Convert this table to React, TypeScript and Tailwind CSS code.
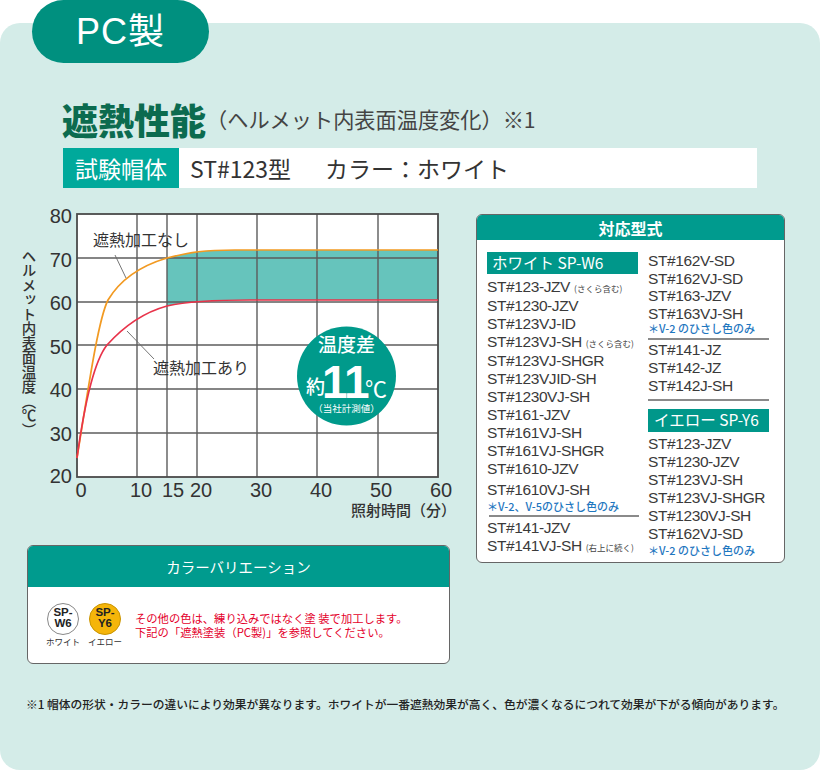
import React from 'react';

const JP = "'Noto Sans CJK JP', sans-serif";
const NUM = "'Liberation Sans', 'Noto Sans CJK JP', sans-serif";

const V_LINES = [137, 167, 197, 257, 317, 378];
const H_LINES = [258, 302, 345, 389, 433];
const Y_LABELS: [string, number][] = [
  ['80', 223],
  ['70', 267],
  ['60', 310],
  ['50', 354],
  ['40', 397],
  ['30', 441],
  ['20', 483],
];
const X_LABELS: [string, number][] = [
  ['0', 81],
  ['10', 141],
  ['15', 173],
  ['20', 201],
  ['30', 261],
  ['40', 321],
  ['50', 381],
  ['60', 441],
];

function Chart() {
  return (
    <svg width="460" height="320" viewBox="0 200 460 320" className="block shrink-0">
      <rect x="77" y="214" width="361" height="263" fill="#fff" />
      {/* difference band */}
      <path
        d="M167 258 C190 252 205 250 235 250 L438 250 L438 300 L250 300 C210 300 185 302 167 306 Z"
        fill="#66c4bc"
      />
      {V_LINES.map(x => (
        <line key={x} x1={x} y1={214} x2={x} y2={477} stroke="#5c5c5c" strokeWidth="1.4" />
      ))}
      {H_LINES.map(y => (
        <line key={y} x1={77} y1={y} x2={438} y2={y} stroke="#5c5c5c" strokeWidth="1.4" />
      ))}
      <rect x="77" y="214" width="361" height="263" fill="none" stroke="#4a4a4a" strokeWidth="1.8" />

      {/* curves */}
      <path
        d="M77 458 C88 390 98 320 108 300 C120 280 140 266 167 258 C190 252 205 250 235 250 L438 250"
        fill="none"
        stroke="#f29a22"
        strokeWidth="1.7"
      />
      <path
        d="M77 458 C85 400 95 360 107 345 C125 325 145 312 167 306 C185 302 210 300 250 300 L438 300"
        fill="none"
        stroke="#e8334a"
        strokeWidth="1.7"
      />

      {/* leaders + curve labels */}
      <line x1="115" y1="255" x2="126" y2="278" stroke="#666" strokeWidth="0.9" />
      <line x1="127" y1="331" x2="154" y2="359" stroke="#666" strokeWidth="0.9" />
      <text x="93" y="246" fontSize="16" fontFamily={JP} fill="#333">
        遮熱加工なし
      </text>
      <text x="153" y="374" fontSize="16" fontFamily={JP} fill="#333">
        遮熱加工あり
      </text>

      {/* axis labels */}
      {Y_LABELS.map(([t, y]) => (
        <text key={t} x="72" y={y} fontSize="20" fontFamily={NUM} fill="#333" textAnchor="end">
          {t}
        </text>
      ))}
      {X_LABELS.map(([t, x]) => (
        <text key={t} x={x} y="497" fontSize="20" fontFamily={NUM} fill="#333" textAnchor="middle">
          {t}
        </text>
      ))}
      <text x="351" y="516" fontSize="15" fontFamily={JP} fill="#333" fontWeight="500">
        照射時間（分）
      </text>
      <text
        x="29"
        y="249"
        fontSize="14.5"
        fontFamily={JP}
        fill="#333"
        fontWeight="500"
        style={{ writingMode: 'vertical-rl' }}
      >
        ヘルメット内表面温度（℃）
      </text>

      {/* badge */}
      <circle cx="346.5" cy="376" r="49.5" fill="#009a8b" />
      <text x="346.5" y="352" fontSize="19" fontFamily={JP} fill="#fff" textAnchor="middle" fontWeight="500">
        温度差
      </text>
      <text x="306" y="394" fontSize="19" fontFamily={JP} fill="#fff" fontWeight="500">
        約
      </text>
      <text x="322" y="398" fontSize="46" fontFamily={NUM} fill="#fff" fontWeight="700" letterSpacing="-1">
        11
      </text>
      <text x="365" y="397" fontSize="22" fontFamily={JP} fill="#fff">
        ℃
      </text>
      <text x="346.5" y="412" fontSize="9.5" fontFamily={JP} fill="#fff" textAnchor="middle">
        （当社計測値）
      </text>
    </svg>
  );
}

function Model({ name, note, lh = 'leading-[18px]' }: { name: string; note?: string; lh?: string }) {
  return (
    <div
      className={`${lh} whitespace-nowrap text-[15.5px] tracking-[-0.4px] text-[#3a3a3a] font-['Liberation_Sans','Noto_Sans_CJK_JP',sans-serif]`}
    >
      {name}
      {note && (
        <span className="ml-[4px] text-[8.5px] tracking-normal text-[#444] font-['Noto_Sans_CJK_JP',sans-serif]">
          {note}
        </span>
      )}
    </div>
  );
}

function Note({ children }: { children: React.ReactNode }) {
  return (
    <div className="h-[12px] whitespace-nowrap text-[11px] leading-[12px] font-medium text-[#1f77bf]">
      {children}
    </div>
  );
}

function ColorLabel({ children, className }: { children: React.ReactNode; className: string }) {
  return (
    <div
      className={`flex h-[22px] items-center whitespace-nowrap bg-[#00978a] text-[15.5px] text-white ${className}`}
    >
      {children}
    </div>
  );
}

const LEFT_MODELS: { name: string; note?: string }[] = [
  { name: 'ST#123-JZV', note: '(さくら含む)' },
  { name: 'ST#1230-JZV' },
  { name: 'ST#123VJ-ID' },
  { name: 'ST#123VJ-SH', note: '(さくら含む)' },
  { name: 'ST#123VJ-SHGR' },
  { name: 'ST#123VJID-SH' },
  { name: 'ST#1230VJ-SH' },
  { name: 'ST#161-JZV' },
  { name: 'ST#161VJ-SH' },
  { name: 'ST#161VJ-SHGR' },
  { name: 'ST#1610-JZV' },
];

const YELLOW_MODELS = ['ST#123-JZV', 'ST#1230-JZV', 'ST#123VJ-SH', 'ST#123VJ-SHGR', 'ST#1230VJ-SH', 'ST#162VJ-SD'];

function ModelBox() {
  return (
    <div className="h-[349px] w-[309px] overflow-hidden rounded-[6px] border-[1.5px] border-[#666] bg-white">
      <div className="flex h-[25px] items-center justify-center bg-[#009b8e] text-[16px] font-bold text-white">
        対応型式
      </div>
      <div className="flex pl-[10px] pt-[12px]">
        {/* left column */}
        <div className="flex w-[151px] flex-col">
          <ColorLabel className="pl-[5px]">ホワイト SP-W6</ColorLabel>
          <div className="mt-[4px]">
            {LEFT_MODELS.map(m => (
              <Model key={m.name} name={m.name} note={m.note} />
            ))}
          </div>
          <div className="mt-[3px]">
            <Model name="ST#1610VJ-SH" />
          </div>
          <div className="mt-[1px]">
            <Note>＊V-2、V-5のひさし色のみ</Note>
          </div>
          <div className="ml-[2px] mt-[3px] h-[1.5px] w-[150px] bg-[#8a8a8a]" />
          <div className="mt-[2.5px]">
            <Model name="ST#141-JZV" />
            <Model name="ST#141VJ-SH" note="(右上に続く)" />
          </div>
        </div>

        {/* right column */}
        <div className="ml-[10px] flex w-[121px] flex-col">
          <div>
            <Model name="ST#162V-SD" lh="leading-[17.5px]" />
            <Model name="ST#162VJ-SD" lh="leading-[17.5px]" />
            <Model name="ST#163-JZV" lh="leading-[17.5px]" />
            <Model name="ST#163VJ-SH" lh="leading-[17.5px]" />
          </div>
          <Note>＊V-2 のひさし色のみ</Note>
          <div className="mt-[4px] h-[1.5px] w-[121px] bg-[#8a8a8a]" />
          <div className="mt-[1.5px]">
            <Model name="ST#141-JZ" />
            <Model name="ST#142-JZ" />
            <Model name="ST#142J-SH" />
          </div>
          <div className="mt-[4px] h-[1.5px] w-[121px] bg-[#8a8a8a]" />
          <ColorLabel className="mt-[8px] h-[23px] pl-[6px]">イエロー SP-Y6</ColorLabel>
          <div className="mt-[3px]">
            {YELLOW_MODELS.map(n => (
              <Model key={n} name={n} />
            ))}
          </div>
          <div className="mt-[1px]">
            <Note>＊V-2 のひさし色のみ</Note>
          </div>
        </div>
      </div>
    </div>
  );
}

function Swatch({ code, label, bg }: { code: [string, string]; label: string; bg: string }) {
  return (
    <div className="flex w-[36px] flex-col items-center">
      <div
        className={`flex h-[32px] w-[32px] flex-col items-center justify-center rounded-full border ${bg} pb-[3px] text-[11.5px] font-bold leading-[11px] text-[#222] font-['Liberation_Sans',sans-serif]`}
      >
        <span>{code[0]}</span>
        <span>{code[1]}</span>
      </div>
      <div className="mt-[1px] whitespace-nowrap text-[8.5px] leading-[10px] text-[#333]">{label}</div>
    </div>
  );
}

function ColorVariation() {
  return (
    <div className="ml-[27px] mt-[25px] h-[119px] w-[423px] overflow-hidden rounded-[6px] border-[1.5px] border-[#666] bg-white">
      <div className="flex h-[41px] items-center justify-center bg-[#009b8e] text-[14.5px] text-white">
        カラーバリエーション
      </div>
      <div className="flex h-[75px] items-center pl-[17px]">
        <div className="flex gap-[6px]">
          <Swatch code={['SP-', 'W6']} label="ホワイト" bg="border-[#888] bg-white" />
          <Swatch code={['SP-', 'Y6']} label="イエロー" bg="border-[#c99400] bg-[#f5b50a]" />
        </div>
        <div className="ml-[12px] text-[11.3px] leading-[14px] text-[#e4002b]">
          <div>その他の色は、練り込みではなく塗 装で加工します。</div>
          <div>下記の「遮熱塗装（PC製)」を参照してください。</div>
        </div>
      </div>
    </div>
  );
}

export default function App() {
  return (
    <div className="h-[770px] w-[820px] overflow-hidden bg-white font-['Noto_Sans_CJK_JP',sans-serif]">
      {/* tab */}
      <div className="relative z-10 ml-[32px] flex h-[63px] w-[177px] items-center justify-center rounded-full bg-[#00907f] text-white">
        <span className="text-[36px] leading-none tracking-[1px] font-['Liberation_Sans','Noto_Sans_CJK_JP',sans-serif]">
          PC製
        </span>
      </div>

      <div className="-mt-[40px] h-[747px] rounded-[20px] bg-[#d4ece8] pt-[76px]">
        {/* title */}
        <div className="flex h-[40px] items-center pl-[62px]">
          <span className="text-[36px] font-black leading-none text-[#0c6b4f]">遮熱性能</span>
          <span className="text-[21.2px] leading-none text-[#444]">（ヘルメット内表面温度変化）※1</span>
        </div>

        {/* test helmet */}
        <div className="ml-[63px] mt-[9px] flex h-[40px]">
          <div className="flex w-[116px] items-center justify-center bg-[#00a99b] text-[23px] text-white">
            試験帽体
          </div>
          <div className="flex w-[578px] items-center bg-white pl-[11px] text-[23px] text-[#333]">
            <span>ST#123型</span>
            <span className="ml-[34px]">カラー：ホワイト</span>
          </div>
        </div>

        <div className="mt-[12px] flex">
          <div className="flex w-[460px] flex-col">
            <Chart />
            <ColorVariation />
          </div>
          <div className="ml-[16px] mt-[14px]">
            <ModelBox />
          </div>
        </div>

        <div className="mt-[33px] whitespace-nowrap pl-[26px] text-[11.75px] font-medium leading-[14px] text-[#222]">
          ※1 帽体の形状・カラーの違いにより効果が異なります。ホワイトが一番遮熱効果が高く、色が濃くなるにつれて効果が下がる傾向があります。
        </div>
      </div>
    </div>
  );
}
